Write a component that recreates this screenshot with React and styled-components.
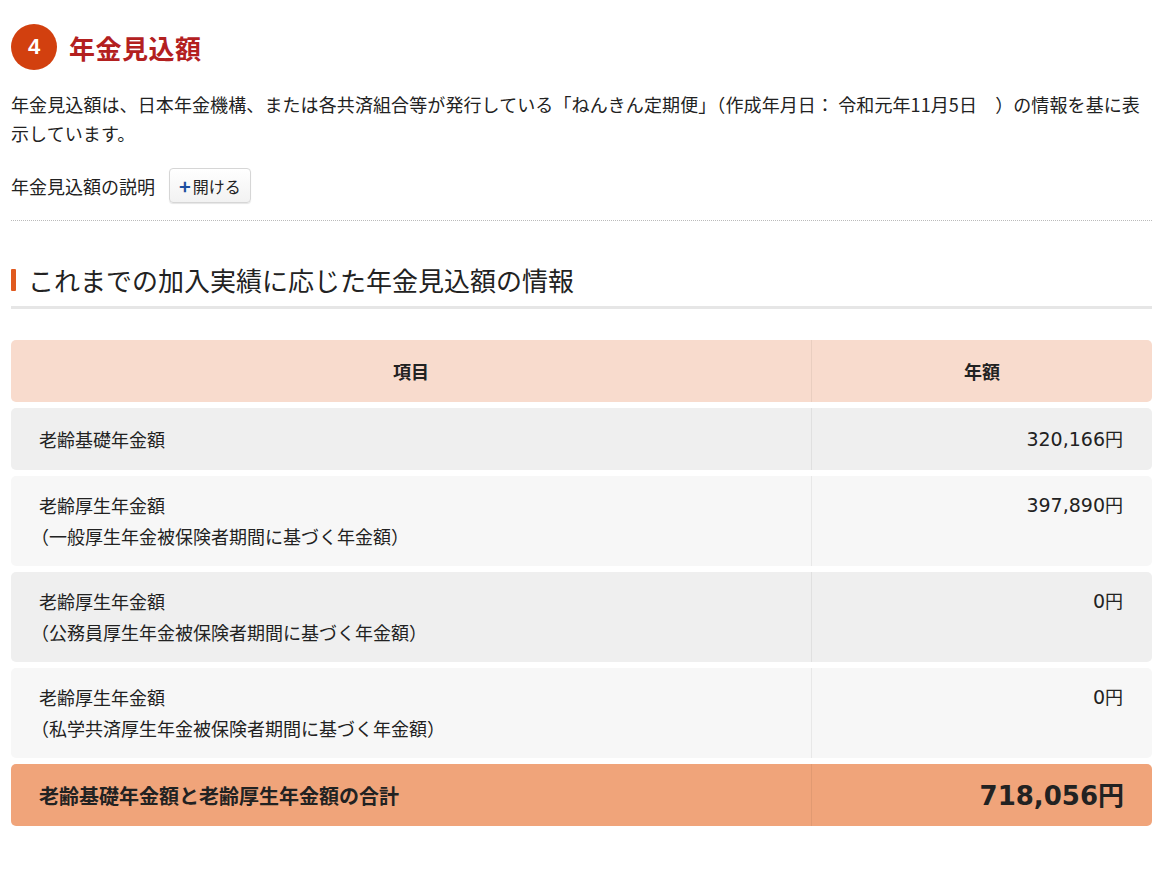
import React from "react";
import styled, { createGlobalStyle } from "styled-components";

const G = createGlobalStyle`
  body { margin: 0; background: #fff; font-family: "Noto Sans CJK JP", "Noto Sans", sans-serif; color: #222; }
`;
const Page = styled.div`padding: 23px 18px 40px 11px; width: 1141px;`;
const Head = styled.div`display: flex; align-items: center; gap: 12px; height: 48px;`;
const Num = styled.div`width: 46px; height: 46px; border-radius: 50%; background: #d2400f; color: #fff;
  font: bold 22px "Liberation Sans", sans-serif; display: flex; align-items: center; justify-content: center;`;
const Title = styled.h1`margin: 0; font-size: 26px; font-weight: bold; color: #b3201f; letter-spacing: 0.5px;`;
const P = styled.p`margin: 19px 0 0; font-size: 18px; line-height: 29px; letter-spacing: 0.1px;`;
const Expl = styled.div`display: flex; align-items: center; gap: 14px; margin-top: 20px; font-size: 18px;
  padding-bottom: 17px; border-bottom: 1px dotted #bbb;`;
const Btn = styled.button`height: 35px; padding: 0 9px; border: 1px solid #d6d6d6; border-radius: 4px;
  background: linear-gradient(#fff, #f2f2f2); font: 16px "Noto Sans CJK JP", sans-serif; color: #222;
  display: flex; align-items: center; gap: 2px; box-shadow: 0 1px 1px rgba(0,0,0,.1);
  span { color: #1d4fa0; font-weight: bold; font-size: 20px; }`;
const Sub = styled.h2`margin: 40px 0 0; font-size: 26px; font-weight: normal; display: flex; align-items: center; gap: 12px;
  padding-bottom: 8px; border-bottom: 3px solid #e6e6e6;
  &::before { content: ""; width: 5px; height: 22px; background: #e05a1f; border-radius: 1px; }`;
const Table = styled.div`display: flex; flex-direction: column; gap: 6px; margin-top: 31px;`;
const Row = styled.div`display: grid; grid-template-columns: 800px 1fr; border-radius: 5px; background: ${p => p.bg};
  min-height: ${p => p.h}px; font-size: ${p => p.big ? 20 : 18}px; font-weight: ${p => p.bold ? "bold" : "normal"};`;
const Cell = styled.div`padding: ${p => p.pad}; display: flex; flex-direction: column;
  justify-content: ${p => p.center ? "center" : "flex-start"}; align-items: ${p => p.align};
  border-left: ${p => p.sep ? "1px solid rgba(0,0,0,0.06)" : "none"}; line-height: 31px;`;
const Money = styled.span`font-family: "DejaVu Sans", sans-serif; font-size: ${p => p.big ? 26 : 19}px;`;

const rows = [
  { bg: "#efefef", h: 62, l: ["老齢基礎年金額"], v: "320,166" },
  { bg: "#f7f7f7", h: 90, l: ["老齢厚生年金額", "（一般厚生年金被保険者期間に基づく年金額）"], v: "397,890" },
  { bg: "#efefef", h: 90, l: ["老齢厚生年金額", "（公務員厚生年金被保険者期間に基づく年金額）"], v: "0" },
  { bg: "#f7f7f7", h: 90, l: ["老齢厚生年金額", "（私学共済厚生年金被保険者期間に基づく年金額）"], v: "0" },
];

export default function App() {
  return (
    <Page>
      <G />
      <Head><Num>4</Num><Title>年金見込額</Title></Head>
      <P>年金見込額は、日本年金機構、または各共済組合等が発行している「ねんきん定期便」（作成年月日： 令和元年11月5日　）の情報を基に表示しています。</P>
      <Expl>年金見込額の説明 <Btn><span>+</span>開ける</Btn></Expl>
      <Sub>これまでの加入実績に応じた年金見込額の情報</Sub>
      <Table>
        <Row bg="#f8dbcd" h={62} bold>
          <Cell center align="center" pad="0">項目</Cell>
          <Cell center align="center" pad="0" sep>年額</Cell>
        </Row>
        {rows.map((r, i) => (
          <Row key={i} bg={r.bg} h={r.h}>
            <Cell center={r.l.length === 1} align="flex-start" pad={r.l.length === 1 ? "0 28px" : "14px 28px"}>
              {r.l.map((t, j) => <div key={j} style={j ? { marginLeft: -8 } : null}>{t}</div>)}
            </Cell>
            <Cell center={r.l.length === 1} align="flex-end" pad={r.l.length === 1 ? "0 29px" : "13px 29px"} sep>
              <div><Money>{r.v}</Money>円</div>
            </Cell>
          </Row>
        ))}
        <Row bg="#f0a47a" h={62} bold big>
          <Cell center align="flex-start" pad="0 28px">老齢基礎年金額と老齢厚生年金額の合計</Cell>
          <Cell center align="flex-end" pad="0 28px" sep><div><Money big>718,056</Money><span style={{ fontSize: 26 }}>円</span></div></Cell>
        </Row>
      </Table>
    </Page>
  );
}
